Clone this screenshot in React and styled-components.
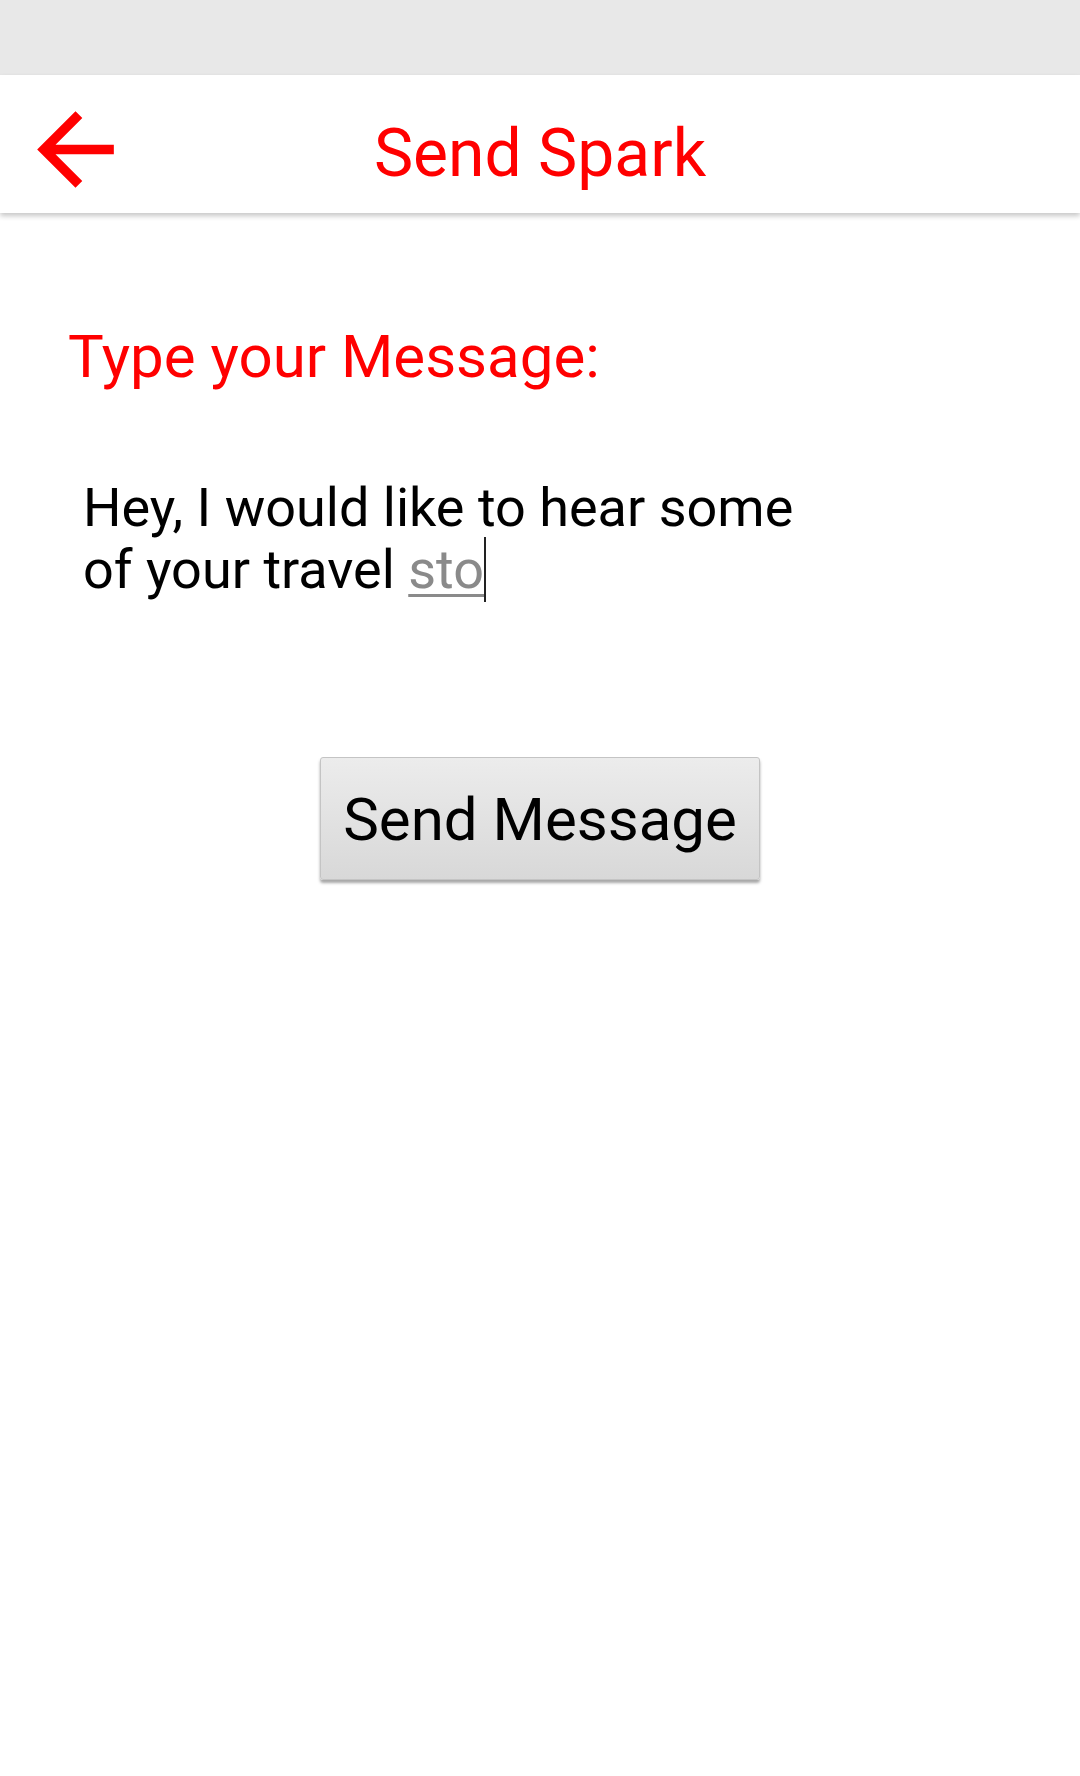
import React from 'react';
import styled, { createGlobalStyle } from 'styled-components';

const GlobalStyle = createGlobalStyle`
  html, body {
    margin: 0;
    padding: 0;
    background: #fff;
  }
  body {
    font-family: Roboto, "Noto Sans", Arial, sans-serif;
  }
`;

const Screen = styled.div`
  width: 1080px;
  min-height: 1776px;
  background: #fff;
  display: flex;
  flex-direction: column;
`;

const StatusBar = styled.div`
  height: 75px;
  background: #e8e8e8;
`;

const Header = styled.header`
  height: 138px;
  background: #fff;
  display: grid;
  grid-template-columns: 1fr auto 1fr;
  align-items: center;
  box-shadow: 0 3px 5px rgba(0, 0, 0, 0.22);
  position: relative;
  z-index: 1;
`;

const BackButton = styled.button`
  justify-self: start;
  margin: 10px 0 0 18px;
  padding: 0;
  border: none;
  background: none;
  width: 115px;
  height: 115px;
  display: flex;
  cursor: pointer;
`;

const Title = styled.h1`
  margin: 0;
  padding-top: 19px;
  font-size: 66px;
  font-weight: 400;
  line-height: 66px;
  color: #ff0000;
`;

const Content = styled.main`
  display: flex;
  flex-direction: column;
  padding: 109px 0 0;
`;

const Label = styled.div`
  padding-left: 68px;
  font-size: 60px;
  line-height: 70px;
  color: #ff0000;
`;

const MessageField = styled.div`
  margin-top: 85px;
  padding-left: 83px;
  font-size: 54px;
  line-height: 62px;
  color: #000;
`;

const Suggestion = styled.span`
  color: #8a8a8a;
  text-decoration: underline;
  text-decoration-color: #8a8a8a;
  text-decoration-thickness: 3px;
  text-underline-offset: 6px;
`;

const Caret = styled.span`
  display: inline-block;
  width: 2px;
  height: 65px;
  margin-top: -6px;
  background: #222;
  vertical-align: -14px;
`;

const SendButton = styled.button`
  align-self: center;
  margin-top: 155px;
  width: 440px;
  height: 123px;
  padding: 2px 0 0;
  font-family: Roboto, "Noto Sans", Arial, sans-serif;
  font-size: 60px;
  color: #000;
  border: 1px solid #c4c4c4;
  border-radius: 3px;
  background: linear-gradient(#ececec, #d8d8d8);
  box-shadow: 0 3px 3px rgba(0, 0, 0, 0.35);
  cursor: pointer;
`;

const ArrowBack = () => (
  <svg width="115" height="115" viewBox="0 0 24 24" fill="#ff0000">
    <path d="M20 11H7.83l5.59-5.59L12 4l-8 8 8 8 1.41-1.41L7.83 13H20v-2z" />
  </svg>
);

export default function App() {
  return (
    <>
      <GlobalStyle />
      <Screen>
        <StatusBar />
        <Header>
          <BackButton aria-label="Back">
            <ArrowBack />
          </BackButton>
          <Title>Send Spark</Title>
        </Header>
        <Content>
          <Label>Type your Message:</Label>
          <MessageField>
            Hey, I would like to hear some
            <br />
            of your travel <Suggestion>sto</Suggestion>
            <Caret />
          </MessageField>
          <SendButton>Send Message</SendButton>
        </Content>
      </Screen>
    </>
  );
}
